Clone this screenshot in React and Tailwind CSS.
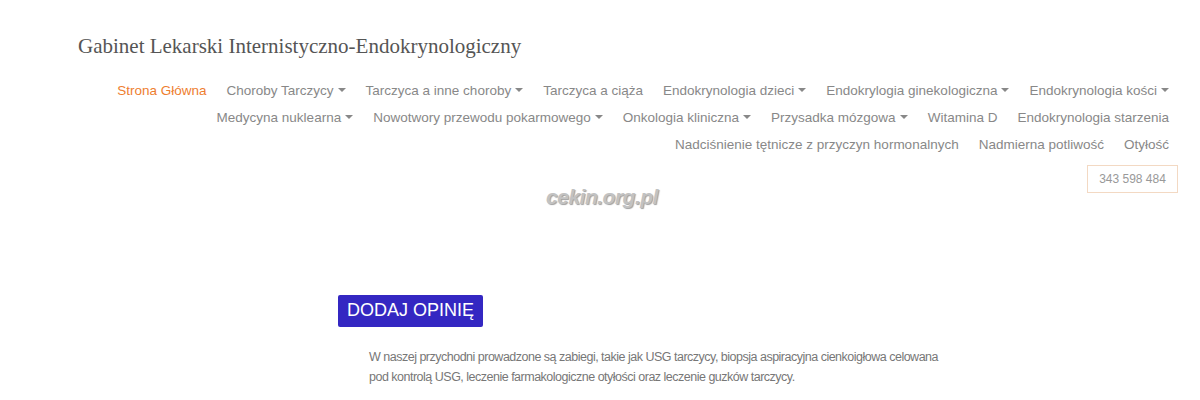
import React from 'react';

const NAV = [
  [
    { label: 'Strona Główna', active: true },
    { label: 'Choroby Tarczycy', drop: true },
    { label: 'Tarczyca a inne choroby', drop: true },
    { label: 'Tarczyca a ciąża' },
    { label: 'Endokrynologia dzieci', drop: true },
    { label: 'Endokrylogia ginekologiczna', drop: true },
    { label: 'Endokrynologia kości', drop: true },
  ],
  [
    { label: 'Medycyna nuklearna', drop: true },
    { label: 'Nowotwory przewodu pokarmowego', drop: true },
    { label: 'Onkologia kliniczna', drop: true },
    { label: 'Przysadka mózgowa', drop: true },
    { label: 'Witamina D' },
    { label: 'Endokrynologia starzenia' },
  ],
  [
    { label: 'Nadciśnienie tętnicze z przyczyn hormonalnych' },
    { label: 'Nadmierna potliwość' },
    { label: 'Otyłość' },
  ],
];

function Caret() {
  return <span className="ml-[4px] inline-block w-0 h-0 border-l-[4px] border-r-[4px] border-t-[4px] border-l-transparent border-r-transparent border-t-[#888] align-[3px]" />;
}

export default function App() {
  return (
    <div className="w-[1200px] h-[400px] overflow-hidden bg-white font-['Liberation_Sans',Arial,sans-serif]">
      {/* header */}
      <div className="pl-[78px] pt-[33px]">
        <div className="font-['Liberation_Serif',serif] text-[21px] leading-[26px] text-[#555]">
          Gabinet Lekarski Internistyczno-Endokrynologiczny
        </div>
      </div>

      {/* nav */}
      <nav className="mt-[19px] pr-[21px] flex flex-col items-end">
        {NAV.map((row, i) => (
          <div key={i} className="flex h-[27px] items-center">
            {row.map(item => (
              <a key={item.label}
                 className={`px-[10px] text-[13.5px] whitespace-nowrap ${item.active ? 'text-[#ee7e2f]' : 'text-[#888]'}`}>
                {item.label}{item.drop && <Caret />}
              </a>
            ))}
          </div>
        ))}
      </nav>

      {/* phone */}
      <div className="flex justify-end pr-[22px] mt-[6px]">
        <div className="w-[91px] h-[28px] border border-[#f3d9c3] flex items-center justify-center text-[12px] text-[#999]">
          343 598 484
        </div>
      </div>

      {/* logo text */}
      <div className="flex justify-center -mt-[12px]">
        <div className="ml-[4px] font-bold italic text-[21px] tracking-[-0.5px] text-[#c2c2c2] [text-shadow:1px_1px_1px_#a0a0a0]">
          cekin.org.pl
        </div>
      </div>

      {/* content */}
      <div className="pl-[338px] mt-[82px]">
        <button className="h-[32px] px-[9px] rounded-[2px] bg-[#3427c2] text-white text-[18px] uppercase">
          Dodaj opinię
        </button>
        <p className="mt-[20px] ml-[31px] w-[578px] text-[12.5px] tracking-[-0.5px] leading-[20px] text-[#777]">
          W naszej przychodni prowadzone są zabiegi, takie jak USG tarczycy, biopsja aspiracyjna cienkoigłowa celowana pod kontrolą USG, leczenie farmakologiczne otyłości oraz leczenie guzków tarczycy.
        </p>
        <p className="mt-[12px] ml-[31px] text-[13px] text-[#ddd]">Adres</p>
      </div>
    </div>
  );
}
